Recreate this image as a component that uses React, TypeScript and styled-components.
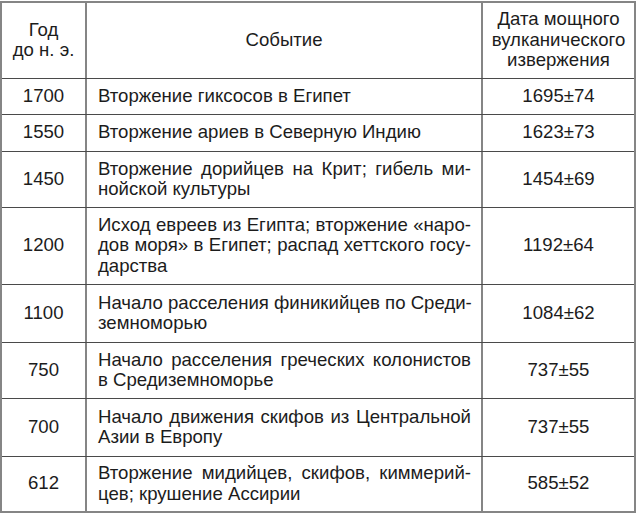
import React from 'react'
import styled, { createGlobalStyle } from 'styled-components'

const GlobalStyle = createGlobalStyle`
  html, body {
    margin: 0;
    padding: 0;
    background: #ffffff;
  }
  body {
    font-family: "Liberation Sans", Arial, sans-serif;
    color: #1c1c1c;
  }
`

const Table = styled.div`
  box-sizing: border-box;
  width: 636px;
  margin-top: 1px;
  border: 2px solid #858585;
  font-size: 18.6px;
  line-height: 20.5px;
`

const Row = styled.div<{ $h: number; $last?: boolean }>`
  box-sizing: border-box;
  display: grid;
  grid-template-columns: 85px 396px 151px;
  height: ${(p) => p.$h}px;
  border-bottom: ${(p) => (p.$last ? 'none' : '1px solid #4a4a4a')};
`

const Cell = styled.div<{ $align?: 'center' | 'left' }>`
  box-sizing: border-box;
  display: flex;
  flex-direction: column;
  justify-content: center;
  align-items: ${(p) => (p.$align === 'left' ? 'stretch' : 'center')};
  text-align: ${(p) => (p.$align === 'left' ? 'left' : 'center')};
  padding: ${(p) => (p.$align === 'left' ? '0 10px 1px 11px' : '0 2px 1px')};
  border-right: 2px solid #858585;

  &:last-child {
    border-right: none;
  }
`

const Line = styled.span<{ $justify?: boolean }>`
  display: block;
  white-space: nowrap;
  text-align: ${(p) => (p.$justify ? 'justify' : 'inherit')};
  text-align-last: ${(p) => (p.$justify ? 'justify' : 'auto')};
`

interface Entry {
  year: string
  event: string[]
  date: string
  h: number
}

const rows: Entry[] = [
  { year: '1700', event: ['Вторжение гиксосов в Египет'], date: '1695±74', h: 36 },
  { year: '1550', event: ['Вторжение ариев в Северную Индию'], date: '1623±73', h: 37 },
  {
    year: '1450',
    event: ['Вторжение дорийцев на Крит; гибель ми-', 'нойской культуры'],
    date: '1454±69',
    h: 56,
  },
  {
    year: '1200',
    event: [
      'Исход евреев из Египта; вторжение «наро-',
      'дов моря» в Египет; распад хеттского госу-',
      'дарства',
    ],
    date: '1192±64',
    h: 77,
  },
  {
    year: '1100',
    event: ['Начало расселения финикийцев по Среди-', 'земноморью'],
    date: '1084±62',
    h: 58,
  },
  {
    year: '750',
    event: ['Начало расселения греческих колонистов', 'в Средиземноморье'],
    date: '737±55',
    h: 56,
  },
  {
    year: '700',
    event: ['Начало движения скифов из Центральной', 'Азии в Европу'],
    date: '737±55',
    h: 58,
  },
  {
    year: '612',
    event: ['Вторжение мидийцев, скифов, киммерий-', 'цев; крушение Ассирии'],
    date: '585±52',
    h: 54,
  },
]

export default function App() {
  return (
    <>
      <GlobalStyle />
      <Table>
        <Row $h={76}>
          <Cell>
            <Line>Год</Line>
            <Line>до н. э.</Line>
          </Cell>
          <Cell>
            <Line>Событие</Line>
          </Cell>
          <Cell>
            <Line>Дата мощного</Line>
            <Line>вулканического</Line>
            <Line>извержения</Line>
          </Cell>
        </Row>
        {rows.map((r, i) => (
          <Row key={r.year + r.date} $h={r.h} $last={i === rows.length - 1}>
            <Cell>{r.year}</Cell>
            <Cell $align="left">
              {r.event.map((text, j) => (
                <Line key={j} $justify={j < r.event.length - 1}>
                  {text}
                </Line>
              ))}
            </Cell>
            <Cell>{r.date}</Cell>
          </Row>
        ))}
      </Table>
    </>
  )
}
